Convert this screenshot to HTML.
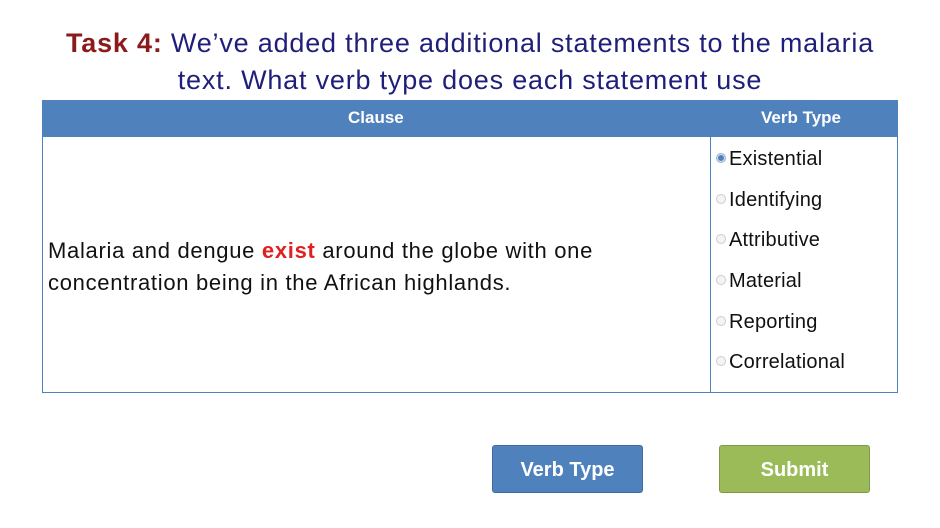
<!DOCTYPE html>
<html><head><style>
body{margin:0;width:940px;height:528px;background:#fff;font-family:"Liberation Sans",sans-serif;position:relative;overflow:hidden}
.a{position:absolute;white-space:nowrap}
.t{left:0;width:940px;text-align:center;font-size:27px;letter-spacing:0.8px;color:#1f1f7a}
.hdr{left:42px;top:100px;width:856px;height:37px;background:#4f81bd}
.body{left:42px;top:137px;width:854px;height:255px;border:1px solid #4f81bd;border-top:none}
.div{left:710px;top:137px;width:1px;height:256px;background:#4f81bd}
.h{color:#fff;font-weight:bold;font-size:17px;top:108px}
.o{left:716px;font-size:20px;letter-spacing:0.2px;color:#111}
.r{display:inline-block;width:10px;height:10px;border-radius:50%;border:1px solid #ccc;background:#f4f4f4;margin-right:3px;vertical-align:2px;box-sizing:border-box}
.r.on{background:#4f81bd;border-color:#9bb5d8;box-shadow:inset 0 0 0 1px #dde6f2}
.btn{top:445px;width:151px;height:48px;border-radius:3px;color:#fff;font-weight:bold;font-size:20px;text-align:center;line-height:48px;box-sizing:border-box}
</style></head><body>
<div class="a t" style="top:28px"><b style="color:#8b1a1a">Task 4:</b> We’ve added three additional statements to the malaria</div>
<div class="a t" style="top:65px">text. What verb type does each statement use</div>
<div class="a hdr"></div>
<div class="a h" style="left:348px">Clause</div>
<div class="a h" style="left:761px">Verb Type</div>
<div class="a body"></div>
<div class="a div"></div>
<div class="a" style="left:48px;top:235px;font-size:22px;letter-spacing:0.7px;line-height:32px;color:#111">Malaria and dengue <b style="color:#e02020">exist</b> around the globe with one<br>concentration being in the African highlands.</div>
<div class="a o" style="top:148px"><span class="r on"></span>Existential</div>
<div class="a o" style="top:189px"><span class="r"></span>Identifying</div>
<div class="a o" style="top:229px"><span class="r"></span>Attributive</div>
<div class="a o" style="top:270px"><span class="r"></span>Material</div>
<div class="a o" style="top:311px"><span class="r"></span>Reporting</div>
<div class="a o" style="top:351px"><span class="r"></span>Correlational</div>
<div class="a btn" style="left:492px;background:#4f81bd;border:1px solid #3d6ca3">Verb Type</div>
<div class="a btn" style="left:719px;background:#9bbb59;border:1px solid #7f9a45">Submit</div>
</body></html>
